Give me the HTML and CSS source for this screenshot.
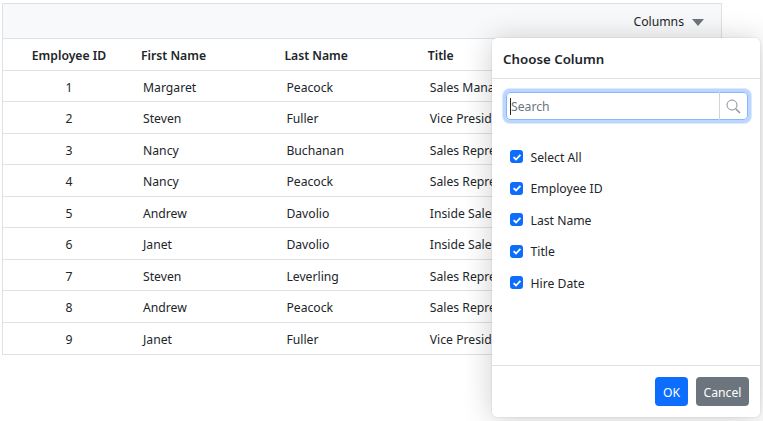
FILE: index.html
```html
<!DOCTYPE html>
<html lang="en">
<head>
<meta charset="utf-8">
<title>Grid</title>
<link rel="stylesheet" href="styles.css">
</head>
<body>
<div class="grid">
  <div class="toolbar">
    <span class="tool-label">Columns</span>
    <span class="caret-down"></span>
  </div>
  <table class="table">
    <colgroup><col class="c-id"><col class="c"><col class="c"><col class="c"><col></colgroup>
    <thead>
      <tr><th class="center">Employee ID</th><th>First Name</th><th>Last Name</th><th>Title</th><th></th></tr>
    </thead>
    <tbody>
      <tr><td class="center">1</td><td>Margaret</td><td>Peacock</td><td>Sales Manager</td><td></td></tr>
      <tr><td class="center">2</td><td>Steven</td><td>Fuller</td><td>Vice President</td><td></td></tr>
      <tr><td class="center">3</td><td>Nancy</td><td>Buchanan</td><td>Sales Representative</td><td></td></tr>
      <tr><td class="center">4</td><td>Nancy</td><td>Peacock</td><td>Sales Representative</td><td></td></tr>
      <tr><td class="center">5</td><td>Andrew</td><td>Davolio</td><td>Inside Sales</td><td></td></tr>
      <tr><td class="center">6</td><td>Janet</td><td>Davolio</td><td>Inside Sales</td><td></td></tr>
      <tr><td class="center">7</td><td>Steven</td><td>Leverling</td><td>Sales Representative</td><td></td></tr>
      <tr><td class="center">8</td><td>Andrew</td><td>Peacock</td><td>Sales Representative</td><td></td></tr>
      <tr><td class="center">9</td><td>Janet</td><td>Fuller</td><td>Vice President</td><td></td></tr>
    </tbody>
  </table>
</div>
<div class="dialog">
  <div class="dlg-head">Choose Column</div>
  <div class="dlg-body">
    <div class="search">
      <div class="search-input"><span class="text-caret"></span><span class="placeholder">Search</span></div>
      <div class="search-btn">
        <svg width="15" height="15" viewBox="0 0 15 15" fill="none" stroke="#8a9099"><circle cx="6" cy="6" r="5"/><path d="M9.7 9.7 14 14" stroke-width="1.4"/></svg>
      </div>
    </div>
    <ul class="checks">
      <li><span class="box"><svg width="10" height="10" viewBox="0 0 10 10"><path d="M1.6 5.2 4 7.5 8.4 2.8" fill="none" stroke="#fff" stroke-width="1.8"/></svg></span>Select All</li>
      <li><span class="box"><svg width="10" height="10" viewBox="0 0 10 10"><path d="M1.6 5.2 4 7.5 8.4 2.8" fill="none" stroke="#fff" stroke-width="1.8"/></svg></span>Employee ID</li>
      <li><span class="box"><svg width="10" height="10" viewBox="0 0 10 10"><path d="M1.6 5.2 4 7.5 8.4 2.8" fill="none" stroke="#fff" stroke-width="1.8"/></svg></span>Last Name</li>
      <li><span class="box"><svg width="10" height="10" viewBox="0 0 10 10"><path d="M1.6 5.2 4 7.5 8.4 2.8" fill="none" stroke="#fff" stroke-width="1.8"/></svg></span>Title</li>
      <li><span class="box"><svg width="10" height="10" viewBox="0 0 10 10"><path d="M1.6 5.2 4 7.5 8.4 2.8" fill="none" stroke="#fff" stroke-width="1.8"/></svg></span>Hire Date</li>
    </ul>
  </div>
  <div class="dlg-foot">
    <button class="btn primary">OK</button>
    <button class="btn secondary">Cancel</button>
  </div>
</div>
</body>
</html>
```
FILE: styles.css
```css
* { box-sizing: border-box; }
html, body { height: 100%; }
body {
  margin: 0;
  padding: 3px 41px 0 2px;
  background: #fff;
  font-family: "Noto Sans", "Open Sans", sans-serif;
  font-size: 12.2px;
  color: #212529;
  overflow: hidden;
}
.grid {
  width: 720px;
  border: 1px solid #dee2e6;
}
.toolbar {
  height: 35px;
  background: #f8f9fa;
  border-bottom: 1px solid #dee2e6;
  display: flex;
  align-items: center;
  justify-content: flex-end;
  padding: 1px 17px 0 0;
  gap: 8px;
}
.caret-down {
  width: 0;
  height: 0;
  border-left: 6px solid transparent;
  border-right: 6px solid transparent;
  border-top: 7px solid #6c757d;
  margin-top: 1px;
}
.table {
  width: 100%;
  table-layout: fixed;
  border-collapse: separate;
  border-spacing: 0;
}
.c-id { width: 132px; }
.c { width: 143.4px; }
th {
  height: 31.5px;
  padding: 2px 6px 0;
  text-align: left;
  font-weight: 600;
  border-bottom: 1px solid #dee2e6;
  color: #212529;
  white-space: nowrap;
}
td {
  height: 31.5px;
  padding: 3px 8px 0;
  border-bottom: 1px solid #dee2e6;
  white-space: nowrap;
  overflow: hidden;
}
tr:last-child td { border-bottom: 0; }
.center { text-align: center; }
.dialog {
  position: absolute;
  left: 492px;
  top: 38px;
  width: 268px;
  height: 379px;
  background: #fff;
  border-radius: 5px;
  box-shadow: 0 0 0 1px rgba(0,0,0,.04), 0 2px 30px rgba(0,0,0,.2);
  display: flex;
  flex-direction: column;
}
.dlg-head {
  height: 41px;
  padding: 2px 11px 0;
  display: flex;
  align-items: center;
  font-size: 13.3px;
  font-weight: 600;
  border-bottom: 1px solid #dee2e6;
}
.dlg-body { flex: 1; padding: 13px 12px 0 14px; }
.search {
  display: flex;
  height: 28px;
  border: 1px solid #86b7fe;
  border-radius: 4px;
  box-shadow: 0 0 0 3px #bcd6fd, 0 0 0 4px #dbe8fe;
}
.search-input {
  flex: 1;
  display: flex;
  align-items: center;
  padding: 1px 0 0 4px;
  position: relative;
}
.text-caret { position: absolute; left: 3px; top: 5px; width: 1px; height: 17px; background: #212529; }
.placeholder { color: #6c757d; }
.search-btn {
  width: 28px;
  border-left: 1px solid #ced4da;
  display: flex;
  align-items: center;
  justify-content: center;
  margin-top: -1px;
  margin-bottom: -1px;
}
.checks { list-style: none; margin: 20.4px 0 0; padding: 0; }
.checks li {
  height: 31.5px;
  display: flex;
  align-items: center;
  gap: 7.5px;
  padding: 2px 0 0 4px;
}
.box {
  width: 13px;
  height: 13px;
  border-radius: 3px;
  background: #0d6efd;
  display: flex;
  align-items: center;
  justify-content: center;
  margin-bottom: 1px;
}
.dlg-foot {
  height: 52px;
  border-top: 1px solid #dee2e6;
  display: flex;
  justify-content: flex-end;
  align-items: flex-start;
  gap: 8px;
  padding: 11px 11px 0 0;
}
.btn {
  height: 29px;
  border: 0;
  border-radius: 4px;
  color: #fff;
  font: inherit;
  padding: 1px 0 0;
}
.primary { width: 33px; background: #0d6efd; }
.secondary { width: 53px; background: #6c757d; }
```
